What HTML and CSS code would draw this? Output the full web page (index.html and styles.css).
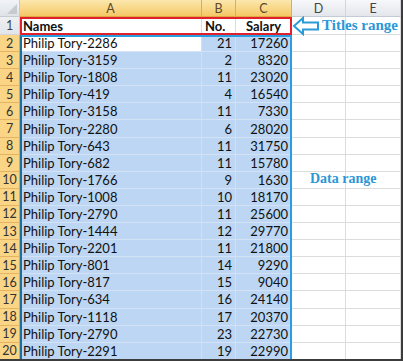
FILE: index.html
```html
<!DOCTYPE html>
<html lang="en">
<head>
    <meta charset="UTF-8">
    <meta name="viewport" content="width=device-width, initial-scale=1.0">
    <title>Titles range / Data range</title>
    <link rel="stylesheet" href="styles.css">
</head>
<body>

    <div class="sheet">
        <!-- Column headers -->
        <div class="row head">
            <div class="corner"><span class="tri"></span></div>
            <div class="col sel">A</div>
            <div class="col sel">B</div>
            <div class="col sel">C</div>
            <div class="col">D</div>
            <div class="col">E</div>
        </div>

        <div class="row titles">
            <div class="num">1</div>
            <div class="cell bold">Names</div>
            <div class="cell bold">No.</div>
            <div class="cell bold center">Salary</div>
            <div class="cell"></div>
            <div class="cell"></div>
        </div>

        <div class="row data">
            <div class="num">2</div>
            <div class="cell active">Philip Tory-2286</div>
            <div class="cell r">21</div>
            <div class="cell r">17260</div>
            <div class="cell"></div><div class="cell"></div>
        </div>
        <div class="row data">
            <div class="num">3</div>
            <div class="cell">Philip Tory-3159</div>
            <div class="cell r">2</div>
            <div class="cell r">8320</div>
            <div class="cell"></div><div class="cell"></div>
        </div>
        <div class="row data">
            <div class="num">4</div>
            <div class="cell">Philip Tory-1808</div>
            <div class="cell r">11</div>
            <div class="cell r">23020</div>
            <div class="cell"></div><div class="cell"></div>
        </div>
        <div class="row data">
            <div class="num">5</div>
            <div class="cell">Philip Tory-419</div>
            <div class="cell r">4</div>
            <div class="cell r">16540</div>
            <div class="cell"></div><div class="cell"></div>
        </div>
        <div class="row data">
            <div class="num">6</div>
            <div class="cell">Philip Tory-3158</div>
            <div class="cell r">11</div>
            <div class="cell r">7330</div>
            <div class="cell"></div><div class="cell"></div>
        </div>
        <div class="row data">
            <div class="num">7</div>
            <div class="cell">Philip Tory-2280</div>
            <div class="cell r">6</div>
            <div class="cell r">28020</div>
            <div class="cell"></div><div class="cell"></div>
        </div>
        <div class="row data">
            <div class="num">8</div>
            <div class="cell">Philip Tory-643</div>
            <div class="cell r">11</div>
            <div class="cell r">31750</div>
            <div class="cell"></div><div class="cell"></div>
        </div>
        <div class="row data">
            <div class="num">9</div>
            <div class="cell">Philip Tory-682</div>
            <div class="cell r">11</div>
            <div class="cell r">15780</div>
            <div class="cell"></div><div class="cell"></div>
        </div>
        <div class="row data">
            <div class="num">10</div>
            <div class="cell">Philip Tory-1766</div>
            <div class="cell r">9</div>
            <div class="cell r">1630</div>
            <div class="cell"></div><div class="cell"></div>
        </div>
        <div class="row data">
            <div class="num">11</div>
            <div class="cell">Philip Tory-1008</div>
            <div class="cell r">10</div>
            <div class="cell r">18170</div>
            <div class="cell"></div><div class="cell"></div>
        </div>
        <div class="row data">
            <div class="num">12</div>
            <div class="cell">Philip Tory-2790</div>
            <div class="cell r">11</div>
            <div class="cell r">25600</div>
            <div class="cell"></div><div class="cell"></div>
        </div>
        <div class="row data">
            <div class="num">13</div>
            <div class="cell">Philip Tory-1444</div>
            <div class="cell r">12</div>
            <div class="cell r">29770</div>
            <div class="cell"></div><div class="cell"></div>
        </div>
        <div class="row data">
            <div class="num">14</div>
            <div class="cell">Philip Tory-2201</div>
            <div class="cell r">11</div>
            <div class="cell r">21800</div>
            <div class="cell"></div><div class="cell"></div>
        </div>
        <div class="row data">
            <div class="num">15</div>
            <div class="cell">Philip Tory-801</div>
            <div class="cell r">14</div>
            <div class="cell r">9290</div>
            <div class="cell"></div><div class="cell"></div>
        </div>
        <div class="row data">
            <div class="num">16</div>
            <div class="cell">Philip Tory-817</div>
            <div class="cell r">15</div>
            <div class="cell r">9040</div>
            <div class="cell"></div><div class="cell"></div>
        </div>
        <div class="row data">
            <div class="num">17</div>
            <div class="cell">Philip Tory-634</div>
            <div class="cell r">16</div>
            <div class="cell r">24140</div>
            <div class="cell"></div><div class="cell"></div>
        </div>
        <div class="row data">
            <div class="num">18</div>
            <div class="cell">Philip Tory-1118</div>
            <div class="cell r">17</div>
            <div class="cell r">20370</div>
            <div class="cell"></div><div class="cell"></div>
        </div>
        <div class="row data">
            <div class="num">19</div>
            <div class="cell">Philip Tory-2790</div>
            <div class="cell r">23</div>
            <div class="cell r">22730</div>
            <div class="cell"></div><div class="cell"></div>
        </div>
        <div class="row data">
            <div class="num">20</div>
            <div class="cell">Philip Tory-2291</div>
            <div class="cell r">19</div>
            <div class="cell r">22990</div>
            <div class="cell"></div><div class="cell"></div>
        </div>

        <!-- Annotations drawn over the sheet -->
        <div class="box-titles"></div>
        <div class="box-data"></div>

        <svg class="arrow" width="28" height="20" viewBox="0 0 28 20">
            <path d="M2 10 L11 2 L11 6.5 L26 6.5 L26 13.5 L11 13.5 L11 18 Z" fill="#fff" stroke="#2a9ad8" stroke-width="2" stroke-linejoin="miter"/>
        </svg>
        <div class="label label-titles">Titles range</div>
        <div class="label label-data">Data range</div>
    </div>

</body>
</html>
```

FILE: styles.css
```css
body {
    margin: 0;
    padding: 0;
    background: #3c3c3c;
    width: 403px;
    height: 361px;
    overflow: hidden;
}

.sheet {
    position: relative;
    width: 401px;
    height: 359px;
    background: #fff;
    font-family: 'Lato', 'Liberation Sans', sans-serif;
    font-size: 13px;
    color: #111;
    overflow: hidden;
}

.row {
    display: grid;
    grid-template-columns: 20px 182px 34px 56px 54px 55px;
    height: 17.1px;
}

.row.head {
    height: 17px;
}

.row.titles {
    height: 18px;
}

/* Column headers */
.corner {
    position: relative;
    background: linear-gradient(#f1f3f6, #dfe3e8);
    border-right: 1px solid #c5cbd3;
    border-bottom: 1px solid #c5cbd3;
    box-sizing: border-box;
}

.corner .tri {
    position: absolute;
    right: 2px;
    bottom: 2px;
    width: 0;
    height: 0;
    border-left: 10px solid transparent;
    border-bottom: 10px solid #c6cbd1;
}

.col {
    display: flex;
    align-items: center;
    justify-content: center;
    background: linear-gradient(#f7f8fa, #e3e6ea);
    border-right: 1px solid #d2d6dc;
    border-bottom: 1px solid #c5cbd3;
    box-sizing: border-box;
    color: #444;
    font-size: 12.5px;
}

.col.sel {
    background: linear-gradient(#fbe7ad, #f8d583 60%, #f5c766);
    border-right: 1px solid #e1ac4d;
    border-bottom: 1px solid #e1a844;
    color: #5a4a2a;
}

/* Row numbers */
.num {
    display: flex;
    align-items: center;
    justify-content: center;
    background: #f9d585;
    border-right: 1px solid #dca64c;
    border-bottom: 1px solid #e4b464;
    box-sizing: border-box;
    color: #333;
    font-size: 12.5px;
}

.titles .num {
    background: linear-gradient(#eef0f3, #e2e5e9);
    border-right: 1px solid #c5cbd3;
    border-bottom: 1px solid #d2d6dc;
    color: #444;
}

/* Cells */
.cell {
    display: flex;
    align-items: center;
    padding: 0 3px;
    border-right: 1px solid #dadcdd;
    border-bottom: 1px solid #dadcdd;
    box-sizing: border-box;
    white-space: nowrap;
    overflow: hidden;
}

.cell.r {
    justify-content: flex-end;
}

.cell.center {
    justify-content: center;
}

.cell.bold {
    font-weight: bold;
}

.data .cell:nth-child(2),
.data .cell:nth-child(3),
.data .cell:nth-child(4) {
    background: #bcd6f3;
    border-right-color: #cfe0f3;
    border-bottom-color: #d3e3f5;
}

.data .cell.active {
    background: #fff;
}

/* Annotation boxes */
.box-titles {
    position: absolute;
    left: 20px;
    top: 17px;
    width: 272px;
    height: 18px;
    border: 2px solid #e0212c;
    box-sizing: border-box;
}

.box-data {
    position: absolute;
    left: 20px;
    top: 35px;
    width: 272px;
    height: 330px;
    border: 2px solid #2a9ee0;
    border-left-color: #1c6f9a;
    box-sizing: border-box;
}

.arrow {
    position: absolute;
    left: 292px;
    top: 16px;
}

.label {
    position: absolute;
    font-family: 'Liberation Serif', serif;
    font-weight: bold;
    color: #2c97d6;
    white-space: nowrap;
}

.label-titles {
    left: 322px;
    top: 17px;
    font-size: 15px;
}

.label-data {
    left: 310px;
    top: 171px;
    font-size: 14px;
}
```
